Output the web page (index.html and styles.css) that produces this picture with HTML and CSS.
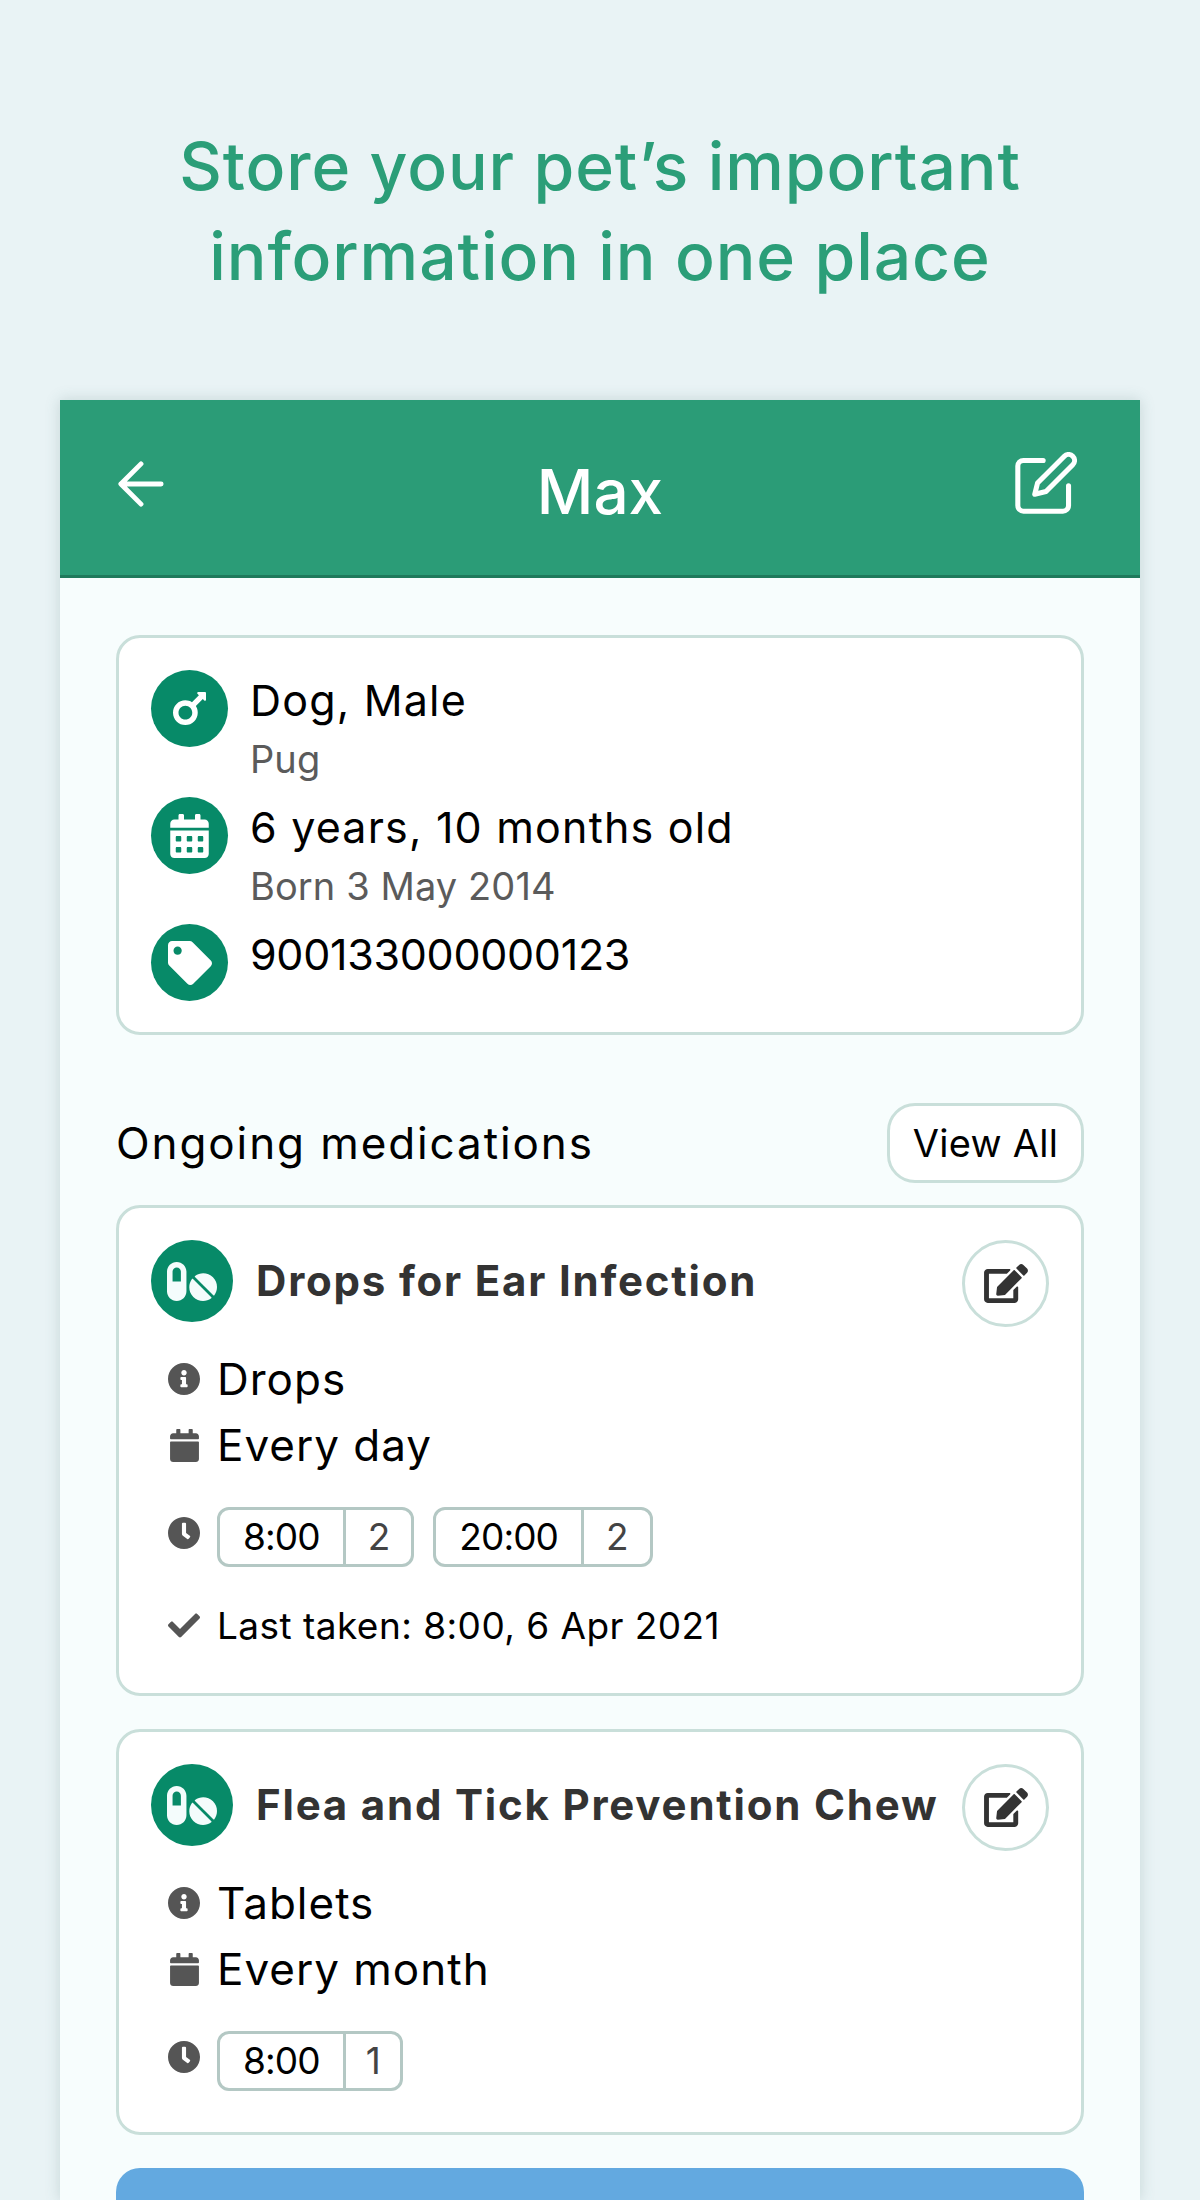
FILE: index.html
```html
<!DOCTYPE html>
<html lang="en">
<head>
<meta charset="utf-8">
<title>Max</title>
<link rel="stylesheet" href="styles.css">
</head>
<body>
<svg class="defs" aria-hidden="true">
  <defs>
    <symbol id="i-mars" viewBox="0 64 384 384"><path d="M372 64h-79c-10.7 0-16 12.9-8.5 20.5l16.9 16.9-80.7 80.7c-22.2-14-48.5-22.1-76.7-22.1C64.5 160 0 224.5 0 304s64.5 144 144 144 144-64.5 144-144c0-28.2-8.1-54.5-22.1-76.7l80.7-80.7 16.9 16.9c7.6 7.6 20.5 2.2 20.5-8.5V76c0-6.6-5.4-12-12-12zM144 384c-44.1 0-80-35.9-80-80s35.9-80 80-80 80 35.9 80 80-35.9 80-80 80z"/></symbol>
    <symbol id="i-calalt" viewBox="0 0 448 512"><path d="M0 464c0 26.5 21.5 48 48 48h352c26.5 0 48-21.5 48-48V192H0v272zm320-196c0-6.6 5.4-12 12-12h40c6.6 0 12 5.4 12 12v40c0 6.6-5.4 12-12 12h-40c-6.6 0-12-5.4-12-12v-40zm0 128c0-6.6 5.4-12 12-12h40c6.6 0 12 5.4 12 12v40c0 6.6-5.4 12-12 12h-40c-6.6 0-12-5.4-12-12v-40zM192 268c0-6.6 5.4-12 12-12h40c6.6 0 12 5.4 12 12v40c0 6.6-5.4 12-12 12h-40c-6.6 0-12-5.4-12-12v-40zm0 128c0-6.6 5.4-12 12-12h40c6.6 0 12 5.4 12 12v40c0 6.6-5.4 12-12 12h-40c-6.6 0-12-5.4-12-12v-40zM64 268c0-6.6 5.4-12 12-12h40c6.6 0 12 5.4 12 12v40c0 6.6-5.4 12-12 12H76c-6.6 0-12-5.4-12-12v-40zm0 128c0-6.6 5.4-12 12-12h40c6.6 0 12 5.4 12 12v40c0 6.6-5.4 12-12 12H76c-6.6 0-12-5.4-12-12v-40zM400 64h-48V16c0-8.8-7.2-16-16-16h-32c-8.8 0-16 7.2-16 16v48H160V16c0-8.8-7.2-16-16-16h-32c-8.8 0-16 7.2-16 16v48H48C21.5 64 0 85.5 0 112v48h448v-48c0-26.5-21.5-48-48-48z"/></symbol>
    <symbol id="i-tag" viewBox="0 0 512 512"><path d="M0 252.118V48C0 21.49 21.49 0 48 0h204.118a48 48 0 0 1 33.941 14.059l211.882 211.882c18.745 18.745 18.745 49.137 0 67.882L293.823 497.941c-18.745 18.745-49.137 18.745-67.882 0L14.059 286.059A48 48 0 0 1 0 252.118zM112 64c-26.51 0-48 21.49-48 48s21.49 48 48 48 48-21.49 48-48-21.49-48-48-48z"/></symbol>
    <symbol id="i-pills" viewBox="0 32 576 448"><path d="M112 32C50.1 32 0 82.1 0 144v224c0 61.9 50.1 112 112 112s112-50.1 112-112V144c0-61.9-50.1-112-112-112zm48 224H64V144c0-26.5 21.5-48 48-48s48 21.5 48 48v112zm139.7-29.7c-3.5-3.5-9.4-3.1-12.3.8-45.3 62.5-40.4 150.1 15.9 206.4 56.3 56.3 143.9 61.2 206.4 15.9 4-2.9 4.3-8.8.8-12.3L299.7 226.3zm229.8-19c-56.3-56.3-143.9-61.2-206.4-15.9-4 2.9-4.3 8.8-.8 12.3l210.8 210.8c3.5 3.5 9.4 3.1 12.3-.8 45.3-62.6 40.5-150.1-15.9-206.4z"/></symbol>
    <symbol id="i-edit" viewBox="0 0 576 512"><path d="M402.6 83.2l90.2 90.2c3.8 3.8 3.8 10 0 13.8L274.4 405.6l-92.8 10.3c-12.4 1.4-22.9-9.1-21.5-21.5l10.3-92.8L388.8 83.2c3.8-3.8 10-3.8 13.8 0zm162-22.9l-48.8-48.8c-15.2-15.2-39.9-15.2-55.2 0l-35.4 35.4c-3.8 3.8-3.8 10 0 13.8l90.2 90.2c3.8 3.8 10 3.8 13.8 0l35.4-35.4c15.2-15.3 15.2-40 0-55.2zM384 346.2V448H64V128h229.8c3.2 0 6.2-1.3 8.5-3.5l40-40c7.6-7.6 2.2-20.5-8.5-20.5H48C21.5 64 0 85.5 0 112v352c0 26.5 21.5 48 48 48h352c26.5 0 48-21.5 48-48V306.2c0-10.7-12.9-16-20.5-8.5l-40 40c-2.2 2.3-3.5 5.3-3.5 8.5z"/></symbol>
    <symbol id="i-info" viewBox="8 8 496 496"><path d="M256 8C119.043 8 8 119.083 8 256c0 136.997 111.043 248 248 248s248-111.003 248-248C504 119.083 392.957 8 256 8zm0 110c23.196 0 42 18.804 42 42s-18.804 42-42 42-42-18.804-42-42 18.804-42 42-42zm56 254c0 6.627-5.373 12-12 12h-88c-6.627 0-12-5.373-12-12v-24c0-6.627 5.373-12 12-12h12v-64h-12c-6.627 0-12-5.373-12-12v-24c0-6.627 5.373-12 12-12h64c6.627 0 12 5.373 12 12v100h12c6.627 0 12 5.373 12 12v24z"/></symbol>
    <symbol id="i-cal" viewBox="0 0 448 512"><path d="M12 192h424c6.6 0 12 5.4 12 12v260c0 26.5-21.5 48-48 48H48c-26.5 0-48-21.5-48-48V204c0-6.6 5.4-12 12-12zm436-44v-36c0-26.5-21.5-48-48-48h-48V12c0-6.6-5.4-12-12-12h-40c-6.6 0-12 5.4-12 12v52H160V12c0-6.6-5.4-12-12-12h-40c-6.6 0-12 5.4-12 12v52H48C21.5 64 0 85.5 0 112v36c0 6.6 5.4 12 12 12h424c6.6 0 12-5.4 12-12z"/></symbol>
    <symbol id="i-clock" viewBox="8 8 496 496"><path d="M256,8C119,8,8,119,8,256S119,504,256,504,504,393,504,256,393,8,256,8Zm92.49,313h0l-20,25a16,16,0,0,1-22.49,2.5h0l-67-49.72a40,40,0,0,1-15-31.23V112a16,16,0,0,1,16-16h32a16,16,0,0,1,16,16V256l58,42.5A16,16,0,0,1,348.49,321Z"/></symbol>
    <symbol id="i-check" viewBox="0 60 512 392"><path d="M173.898 439.404l-166.4-166.4c-9.997-9.997-9.997-26.206 0-36.204l36.203-36.204c9.997-9.998 26.207-9.998 36.204 0L192 312.69 432.095 72.596c9.997-9.997 26.207-9.997 36.204 0l36.203 36.204c9.997 9.997 9.997 26.206 0 36.204l-294.4 294.401c-9.998 9.997-26.207 9.997-36.204-.001z"/></symbol>
  </defs>
</svg>

<h1 class="headline">Store your pet’s important<br>information in one place</h1>

<main class="phone">
  <header class="topbar">
    <svg class="back" viewBox="4 4 16 16"><path d="M19 12H5M12 19l-7-7 7-7"/></svg>
    <div class="topbar-title">Max</div>
    <svg class="pencil" viewBox="1 1 22 22"><path d="M11 4H4a2 2 0 0 0-2 2v14a2 2 0 0 0 2 2h14a2 2 0 0 0 2-2v-7"/><path d="M18.5 2.5a2.121 2.121 0 0 1 3 3L12 15l-4 1 1-4 9.5-9.5z"/></svg>
  </header>

  <div class="content">
    <section class="card info-card">
      <div class="info-row">
        <span class="badge"><svg class="g-mars"><use href="#i-mars"/></svg></span>
        <div><div class="info-main">Dog, Male</div><div class="info-sub">Pug</div></div>
      </div>
      <div class="info-row">
        <span class="badge"><svg class="g-calalt"><use href="#i-calalt"/></svg></span>
        <div><div class="info-main">6 years, 10 months old</div><div class="info-sub">Born 3 May 2014</div></div>
      </div>
      <div class="info-row">
        <span class="badge"><svg class="g-tag"><use href="#i-tag"/></svg></span>
        <div><div class="info-main info-number">900133000000123</div></div>
      </div>
    </section>

    <div class="section-head">
      <h2 class="section-title">Ongoing medications</h2>
      <button class="view-all">View All</button>
    </div>

    <article class="card med-card">
      <div class="med-head">
        <span class="badge badge-lg"><svg class="g-pills"><use href="#i-pills"/></svg></span>
        <h3 class="med-title">Drops for Ear Infection</h3>
        <button class="edit-btn"><svg class="g-edit"><use href="#i-edit"/></svg></button>
      </div>
      <div class="med-line"><span class="slot"><svg class="g-small"><use href="#i-info"/></svg></span>Drops</div>
      <div class="med-line"><span class="slot"><svg class="g-cal"><use href="#i-cal"/></svg></span>Every day</div>
      <div class="dose-row">
        <span class="slot slot-clock"><svg class="g-small"><use href="#i-clock"/></svg></span>
        <div class="chip"><span class="chip-time">8:00</span><span class="chip-qty">2</span></div>
        <div class="chip"><span class="chip-time">20:00</span><span class="chip-qty">2</span></div>
      </div>
      <div class="last-taken"><span class="slot"><svg class="g-check"><use href="#i-check"/></svg></span>Last taken: 8:00, 6 Apr 2021</div>
    </article>

    <article class="card med-card">
      <div class="med-head">
        <span class="badge badge-lg"><svg class="g-pills"><use href="#i-pills"/></svg></span>
        <h3 class="med-title">Flea and Tick Prevention Chew</h3>
        <button class="edit-btn"><svg class="g-edit"><use href="#i-edit"/></svg></button>
      </div>
      <div class="med-line"><span class="slot"><svg class="g-small"><use href="#i-info"/></svg></span>Tablets</div>
      <div class="med-line"><span class="slot"><svg class="g-cal"><use href="#i-cal"/></svg></span>Every month</div>
      <div class="dose-row">
        <span class="slot slot-clock"><svg class="g-small"><use href="#i-clock"/></svg></span>
        <div class="chip"><span class="chip-time">8:00</span><span class="chip-qty chip-qty-one">1</span></div>
      </div>
    </article>

    <div class="cta"></div>
  </div>
</main>
</body>
</html>
```

FILE: styles.css
```css
* { box-sizing: border-box; }
html, body { margin: 0; padding: 0; }
body {
  height: 2200px;
  overflow: hidden;
  background: #e9f3f5;
  font-family: "Inter", "Noto Sans", sans-serif;
  color: #000;
}
.defs { display: none; }
svg { display: block; fill: currentColor; }

.headline {
  margin: 0;
  padding-top: 121px;
  height: 400px;
  font-size: 66px;
  line-height: 90px;
  font-weight: 500;
  letter-spacing: 0.9px;
  text-align: center;
  color: #2b9e78;
}

.phone {
  margin: 0 60px;
  height: 1800px;
  background: #f7fdfd;
  box-shadow: 0 0 14px rgba(70, 110, 110, 0.22);
}

.topbar {
  height: 178px;
  background: #2b9c77;
  border-bottom: 3px solid #1f7a5c;
  padding: 52px 58px 0;
  display: grid;
  grid-template-columns: 1fr auto 1fr;
  align-items: start;
  color: #fff;
}
.back { width: 46px; height: 46px; margin-top: 9px; fill: none; stroke: #fff; stroke-width: 1.7; stroke-linecap: round; stroke-linejoin: round; }
.pencil { width: 62px; height: 62px; justify-self: end; margin-right: 5px; fill: none; stroke: #fff; stroke-width: 1.8; stroke-linecap: round; stroke-linejoin: round; }
.topbar-title { font-size: 62px; line-height: 80px; font-weight: 500; }

.content { padding: 57px 56px 0; }

.card {
  background: #fff;
  border: 3px solid #c9dfda;
  border-radius: 24px;
}

.info-card {
  height: 400px;
  padding: 32px;
  display: flex;
  flex-direction: column;
  gap: 9px;
}
.info-row { display: flex; gap: 22px; align-items: flex-start; }
.badge {
  flex: none;
  width: 77px;
  height: 77px;
  border-radius: 50%;
  background: #078a68;
  color: #fff;
  display: flex;
  align-items: center;
  justify-content: center;
}
.badge-lg { width: 82px; height: 82px; color: #f4fcfc; }
.info-main { font-size: 43px; line-height: 60px; letter-spacing: 1.2px; }
.info-number { letter-spacing: -0.3px; }
.info-sub { font-size: 38px; line-height: 58px; letter-spacing: 0.1px; color: #5b5b5b; }

.g-mars { width: 33px; height: 33px; }
.g-calalt { width: 39px; height: 44px; }
.g-tag { width: 44px; height: 44px; }
.g-pills { width: 50px; height: 39px; }
.g-edit { width: 44px; height: 39px; color: #333; }
.g-small { width: 32px; height: 32px; color: #555; }
.g-cal { width: 29px; height: 33px; color: #555; margin-left: 2px; }
.g-check { width: 32px; height: 25px; color: #555; }

.section-head {
  margin-top: 68px;
  height: 80px;
  display: flex;
  align-items: center;
  justify-content: space-between;
}
.section-title { margin: 0; font-size: 44px; font-weight: 400; letter-spacing: 1.9px; }
.view-all {
  width: 197px;
  height: 80px;
  padding: 0;
  background: #fff;
  border: 3px solid #c9dfda;
  border-radius: 28px;
  font: inherit;
  font-size: 38px;
  letter-spacing: 0.3px;
  color: #000;
}

.med-card { margin-top: 22px; padding: 32px 32px 38px; }
.med-card + .med-card { margin-top: 33px; }
.med-head { display: flex; align-items: flex-start; height: 87px; margin-bottom: 19px; }
.med-title {
  margin: 0 0 0 23px;
  flex: 1;
  font-size: 42px;
  line-height: 82px;
  font-weight: 700;
  letter-spacing: 1.8px;
  color: #333;
  white-space: nowrap;
}
.edit-btn {
  flex: none;
  width: 87px;
  height: 87px;
  padding: 0;
  background: #fff;
  border: 3px solid #c9dfda;
  border-radius: 50%;
  display: flex;
  align-items: center;
  justify-content: center;
}
.med-line {
  display: flex;
  align-items: center;
  height: 66px;
  padding-left: 17px;
  font-size: 44px;
  letter-spacing: 1px;
}
.slot { flex: none; width: 49px; display: flex; justify-content: flex-start; }
.dose-row { display: flex; gap: 19px; margin: 29px 0 3px; padding-left: 17px; align-items: flex-start; }
.slot-clock { width: 32px; margin: 10px -2px 0 0; }
.chip {
  display: flex;
  height: 60px;
  background: #fff;
  border: 3px solid #b4c8c4;
  border-radius: 12px;
  font-size: 37px;
  line-height: 54px;
  letter-spacing: -0.9px;
}
.chip-time { padding: 0 23px; border-right: 3px solid #b4c8c4; }
.chip-qty { padding: 0 22px; color: #444; }
.chip-qty-one { padding: 0 20px; }
.last-taken {
  display: flex;
  align-items: center;
  height: 60px;
  margin-top: 28px;
  padding-left: 17px;
  font-size: 37px;
  letter-spacing: 0.45px;
}

.cta {
  margin-top: 33px;
  height: 80px;
  background: #63a9e0;
  border-radius: 24px;
}
```
